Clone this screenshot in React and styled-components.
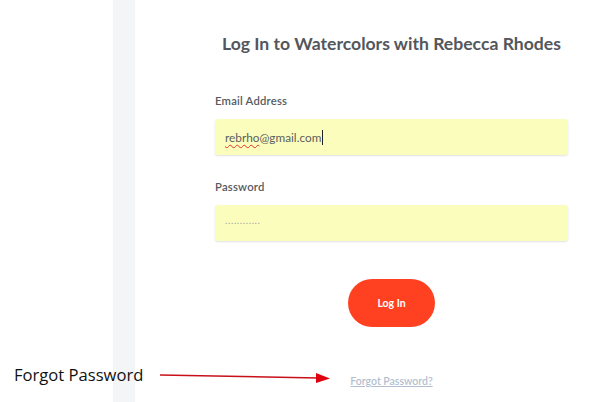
import React from "react";
import styled, { createGlobalStyle } from "styled-components";

const Global = createGlobalStyle`
  html, body { margin: 0; padding: 0; background: #fff; }
  body { width: 596px; height: 402px; overflow: hidden; font-family: Lato, "Noto Sans", sans-serif; }
`;

const Page = styled.div`
  position: relative;
  display: flex;
  width: 596px;
  height: 402px;
  background: #fff;
`;

const Gutter = styled.div`
  width: 113px;
  flex: none;
`;

const Strip = styled.div`
  width: 22px;
  flex: none;
  background: #f4f5f7;
`;

const Main = styled.main`
  flex: 1;
  padding: 0 0 0 80px;
`;

const Form = styled.div`
  width: 353px;
  display: flex;
  flex-direction: column;
`;

const Title = styled.h1`
  margin: 34px -30px 0;
  text-align: center;
  font-family: Lato, sans-serif;
  font-weight: 700;
  font-size: 17.6px;
  line-height: 20px;
  color: #53575c;
`;

const Label = styled.div`
  margin-top: ${(p) => p.$top}px;
  font-size: 11.3px;
  font-weight: 600;
  line-height: 13px;
  color: #565b61;
  letter-spacing: 0.2px;
`;

const Field = styled.div`
  margin-top: 12px;
  height: 36px;
  border-radius: 3px;
  background: #fbfdbc;
  box-shadow: 0 1px 2px rgba(0, 0, 0, 0.12);
  display: flex;
  align-items: center;
  padding-left: 10px;
  font-size: 11.8px;
  color: #5b5e61;
`;

const Misspelled = styled.span`
  text-decoration: underline wavy #e03030;
  text-decoration-thickness: 1px;
  text-underline-offset: 2px;
`;

const Caret = styled.span`
  display: inline-block;
  width: 1px;
  height: 15px;
  background: #222;
  margin-left: 1px;
  vertical-align: middle;
`;

const Dots = styled.span`
  font-size: 10px;
  letter-spacing: 0.6px;
  color: #a4a4a4;
  position: relative;
  top: -3px;
`;

const Button = styled.button`
  align-self: center;
  margin-top: 38px;
  width: 87px;
  height: 48px;
  border: none;
  border-radius: 24px;
  background: #ff4122;
  color: #fff;
  font-family: Lato, sans-serif;
  font-weight: 700;
  font-size: 10.5px;
`;

const Forgot = styled.a`
  align-self: center;
  margin-top: 48px;
  font-size: 10.5px;
  font-weight: 600;
  color: #b3bfcf;
  text-decoration: underline;
`;

const Note = styled.div`
  position: absolute;
  left: 14px;
  top: 363px;
  font-family: "Open Sans", sans-serif;
  font-size: 16.6px;
  color: #111;
`;

const Arrow = styled.svg`
  position: absolute;
  left: 158px;
  top: 368px;
`;

export default function App() {
  return (
    <>
      <Global />
      <Page>
        <Gutter />
        <Strip />
        <Main>
          <Form>
            <Title>Log In to Watercolors with Rebecca Rhodes</Title>
            <Label $top={40}>Email Address</Label>
            <Field>
              <span>
                <Misspelled>rebrho</Misspelled>@gmail.com
              </span>
              <Caret />
            </Field>
            <Label $top={25}>Password</Label>
            <Field>
              <Dots>............</Dots>
            </Field>
            <Button>Log In</Button>
            <Forgot>Forgot Password?</Forgot>
          </Form>
        </Main>
        <Note>Forgot Password</Note>
        <Arrow width="175" height="16" viewBox="0 0 175 16">
          <line x1="2" y1="7" x2="160" y2="10" stroke="#c8101a" strokeWidth="1.6" />
          <polygon points="158,5 172,10.5 158,15" fill="#e00010" />
        </Arrow>
      </Page>
    </>
  );
}
